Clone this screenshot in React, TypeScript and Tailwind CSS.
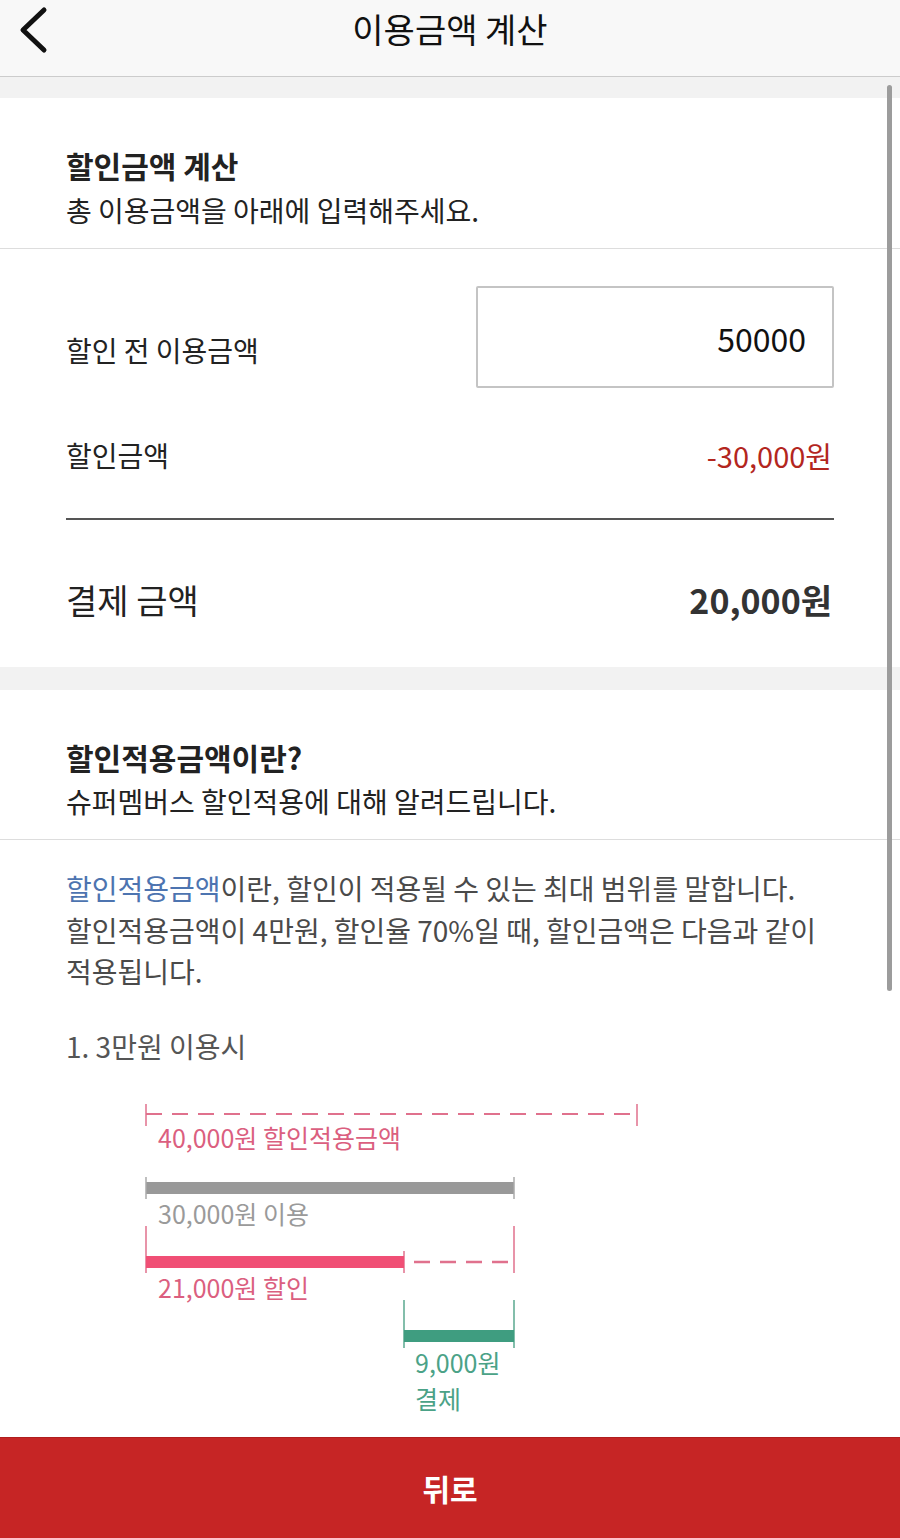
import React from 'react';

const PINK = '#db5f7f';

function Diagram() {
    return (
        <svg width="768" height="330" viewBox="0 0 768 330" className="block mt-[24px]">
            {/* 40,000 range */}
            <line x1="80" y1="24" x2="571" y2="24" stroke="#e0718d" strokeWidth="2" strokeDasharray="16 10" />
            <line x1="80" y1="14" x2="80" y2="36" stroke="#e0718d" strokeWidth="1.5" />
            <line x1="571" y1="14" x2="571" y2="36" stroke="#e0718d" strokeWidth="1.5" />
            <text x="92" y="58" fill={PINK} fontSize="25">40,000원 할인적용금액</text>

            {/* 30,000 used */}
            <rect x="80" y="92" width="368" height="12" fill="#999999" />
            <line x1="80" y1="87" x2="80" y2="109" stroke="#aaaaaa" strokeWidth="1.5" />
            <line x1="448" y1="87" x2="448" y2="109" stroke="#aaaaaa" strokeWidth="1.5" />
            <text x="92" y="134" fill="#9a9a9a" fontSize="25">30,000원 이용</text>

            {/* 21,000 discount */}
            <line x1="80" y1="136" x2="80" y2="183" stroke="#e0718d" strokeWidth="1.5" />
            <line x1="448" y1="136" x2="448" y2="183" stroke="#e0718d" strokeWidth="1.5" />
            <line x1="338" y1="161" x2="338" y2="183" stroke="#e0718d" strokeWidth="1.5" />
            <rect x="80" y="166" width="258" height="12" fill="#f04f75" />
            <line x1="348" y1="172" x2="448" y2="172" stroke="#e0718d" strokeWidth="2.5" strokeDasharray="16 10" />
            <text x="92" y="208" fill={PINK} fontSize="25">21,000원 할인</text>

            {/* 9,000 pay */}
            <line x1="338" y1="210" x2="338" y2="258" stroke="#5aa98f" strokeWidth="1.5" />
            <line x1="448" y1="210" x2="448" y2="258" stroke="#5aa98f" strokeWidth="1.5" />
            <rect x="338" y="240" width="110" height="12" fill="#3f9d80" />
            <text x="349" y="283" fill="#4ba287" fontSize="25">9,000원</text>
            <text x="349" y="319" fill="#4ba287" fontSize="25">결제</text>
        </svg>
    );
}

export default function App() {
    return (
        <div className="relative w-[900px] h-[1538px] flex flex-col overflow-hidden bg-[#f2f2f2] font-['Noto_Sans_CJK_KR','Noto_Sans',sans-serif] text-[#222]">
            {/* HEADER */}
            <div className="relative h-[77px] shrink-0 bg-[#f8f8f8] border-b border-[#cccccc] flex items-center justify-center">
                <svg className="absolute left-[16px] top-[6px]" width="36" height="48" viewBox="0 0 36 48">
                    <polyline points="28,4 7,24 28,44" fill="none" stroke="#111" strokeWidth="5" strokeLinecap="round" strokeLinejoin="round" />
                </svg>
                <h1 className="text-[34px] leading-[40px] text-[#111] -mt-[18px]">이용금액 계산</h1>
            </div>

            <div className="flex-1 flex flex-col overflow-hidden pt-[21px] gap-[23px]">
                {/* CALCULATOR */}
                <section className="shrink-0 bg-white">
                    <div className="px-[66px] pt-[47px] pb-[18px] border-b border-[#dddddd]">
                        <h2 className="text-[30px] leading-[40px] font-bold">할인금액 계산</h2>
                        <p className="mt-[5px] text-[28px] leading-[40px] text-[#222]">총 이용금액을 아래에 입력해주세요.</p>
                    </div>
                    <div className="px-[66px] pt-[37px] pb-[45px]">
                        <div className="flex justify-between items-start">
                            <span className="mt-[44px] text-[28px] leading-[40px]">할인 전 이용금액</span>
                            <div className="w-[358px] h-[102px] border-2 border-[#c4c4c4] rounded-[2px] flex items-start justify-end pt-[28px] pr-[26px]">
                                <span className="text-[32px] leading-[44px] text-[#111]">50000</span>
                            </div>
                        </div>
                        <div className="mt-[47px] flex justify-between items-center h-[40px]">
                            <span className="text-[28px] leading-[40px]">할인금액</span>
                            <span className="text-[29px] leading-[40px] text-[#b3261e] mr-[2px]">-30,000원</span>
                        </div>
                        <div className="mt-[43px] h-[2px] bg-[#555555]" />
                        <div className="mt-[58px] flex justify-between items-center h-[44px]">
                            <span className="text-[34px] leading-[44px]">결제 금액</span>
                            <span className="text-[34px] leading-[44px] font-bold text-[#333] mr-[2px]">20,000원</span>
                        </div>
                    </div>
                </section>

                {/* INFO */}
                <section className="flex-1 bg-white overflow-hidden">
                    <div className="px-[66px] pt-[47px] pb-[18px] border-b border-[#dddddd]">
                        <h2 className="text-[30px] leading-[40px] font-bold">할인적용금액이란?</h2>
                        <p className="mt-[4px] text-[28px] leading-[40px] text-[#222]">슈퍼멤버스 할인적용에 대해 알려드립니다.</p>
                    </div>
                    <div className="px-[66px] pt-[28px]">
                        <p className="text-[28px] leading-[41.5px] text-[#4a4a4a] whitespace-nowrap">
                            <span className="text-[#4d74b0]">할인적용금액</span>이란, 할인이 적용될 수 있는 최대 범위를 말합니다.
                            <br />
                            할인적용금액이 4만원, 할인율 70%일 때, 할인금액은 다음과 같이
                            <br />
                            적용됩니다.
                        </p>
                        <p className="mt-[33px] text-[28px] leading-[40px] text-[#555]">1. 3만원 이용시</p>
                    </div>
                    <div className="px-[66px]">
                        <Diagram />
                    </div>
                </section>
            </div>

            {/* BOTTOM BUTTON */}
            <button className="h-[101px] shrink-0 bg-[#c62525] border-t border-[#b01e1e] flex items-center justify-center">
                <span className="text-[30px] leading-[40px] font-bold text-white">뒤로</span>
            </button>

            {/* scrollbar */}
            <div className="absolute left-[887px] top-[85px] w-[5px] h-[906px] rounded-full bg-[#9c9c9c]" />
        </div>
    );
}
